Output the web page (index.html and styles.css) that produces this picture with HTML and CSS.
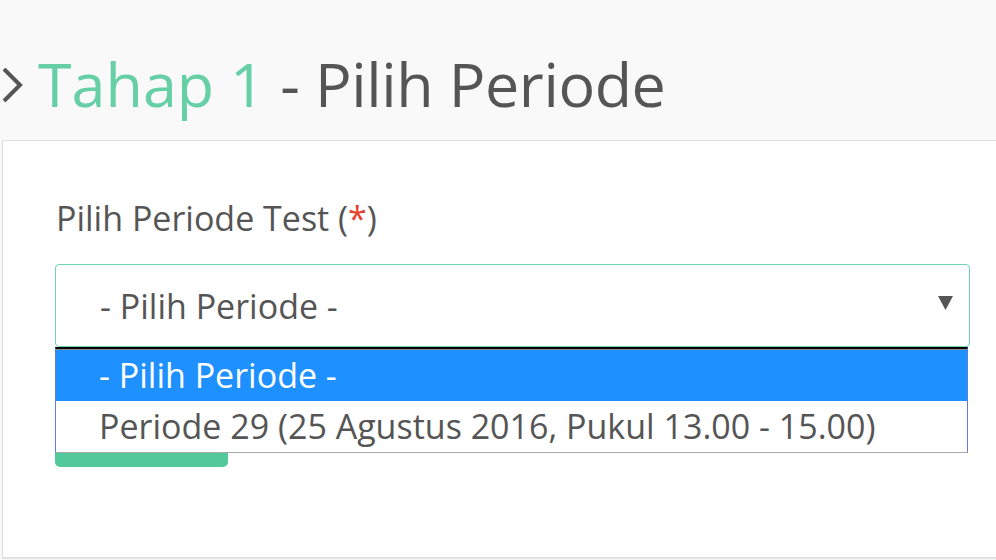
FILE: index.html
```html
<!DOCTYPE html>
<html>
<head>
<meta charset="utf-8">
<link rel="stylesheet" href="styles.css">
</head>
<body>
<div class="page">
  <h1 class="title">
    <svg class="chev" width="22" height="36" viewBox="0 0 22 36"><polyline points="2,1 18,17 2,33" fill="none" stroke="#555" stroke-width="4"/></svg>
    <span class="step">Tahap 1</span><span class="rest">&nbsp;- Pilih Periode</span>
  </h1>
  <div class="card">
    <div class="label">Pilih Periode Test (<span class="req">*</span>)</div>
    <div class="select-wrap">
      <div class="select">
        <span class="select-text">- Pilih Periode -</span>
        <svg class="arrow" width="15" height="14" viewBox="0 0 15 14"><polygon points="0,0 15,0 7.5,14" fill="#555"/></svg>
      </div>
      <div class="menu">
        <div class="opt active">- Pilih Periode -</div>
        <div class="opt">Periode 29 (25 Agustus 2016, Pukul 13.00 - 15.00)</div>
      </div>
    </div>
    <div class="btn"></div>
  </div>
</div>
</body>
</html>
```
FILE: styles.css
```css
html, body {
  margin: 0;
  padding: 0;
  background: #f9f9f9;
  overflow: hidden;
  font-family: "Open Sans", "Liberation Sans", sans-serif;
}
.page {
  width: 996px;
  height: 560px;
  overflow: hidden;
}
.title {
  margin: 0;
  padding: 44px 0 16px 0;
  height: 140px;
  box-sizing: border-box;
  display: flex;
  align-items: flex-start;
  font-weight: 400;
  font-size: 61px;
  line-height: 80px;
  color: #555;
  white-space: nowrap;
}
.chev {
  margin: 24px 14px 0 2px;
  flex: none;
}
.step {
  color: #66cfa6;
}
.rest {
  letter-spacing: -0.4px;
}
.card {
  margin-left: 2px;
  width: 1100px;
  height: 418px;
  box-sizing: border-box;
  background: #fff;
  border: 1px solid #ddd;
  box-shadow: 0 1px 1px #e6e6e6;
  padding: 57px 0 0 52px;
}
.label {
  font-size: 34px;
  line-height: 40px;
  color: #555;
  margin-left: 1px;
}
.req {
  color: #e5412d;
}
.select-wrap {
  position: relative;
  width: 915px;
  margin-top: 26px;
}
.select {
  height: 83px;
  box-sizing: border-box;
  border: 1px solid #6fd3ac;
  border-radius: 4px;
  background: #fff;
  display: flex;
  align-items: center;
  padding: 0 16px 0 44px;
  font-size: 34px;
  color: #555;
}
.select-text {
  flex: 1;
}
.arrow {
  flex: none;
  margin-top: -6px;
}
.menu {
  position: absolute;
  left: 0;
  top: 83px;
  width: 913px;
  box-sizing: border-box;
  background: #fff;
  border-top: 2px solid #000;
  border-left: 1px solid #5b7ed6;
  border-right: 1px solid #5b7ed6;
  border-bottom: 1px solid #aaa;
  box-shadow: inset 0 1px 0 #8c8c8c;
}
.opt {
  height: 51px;
  line-height: 51px;
  padding-left: 43px;
  font-size: 34px;
  color: #555;
  white-space: nowrap;
}
.opt.active {
  background: #1e90ff;
  color: #fff;
  margin-top: 1px;
}
.btn {
  margin-top: 30px;
  width: 173px;
  height: 90px;
  background: #52c99a;
  border-radius: 5px;
}
```
